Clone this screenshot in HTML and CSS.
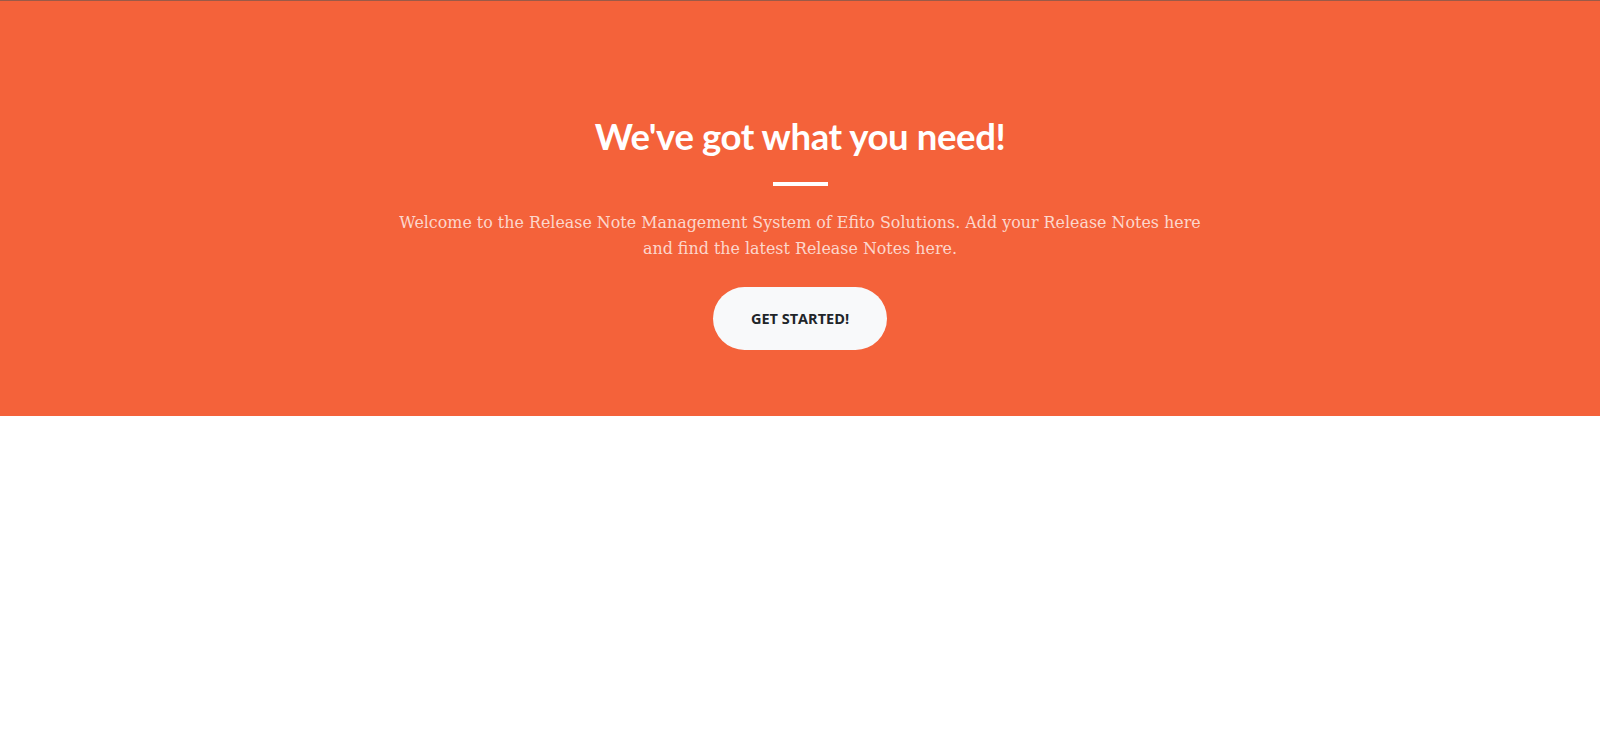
FILE: index.html
```html
<!DOCTYPE html>
<html lang="en">
<head>
<meta charset="utf-8">
<title>Release Notes</title>
<link rel="stylesheet" href="styles.css">
</head>
<body>
<section class="hero">
  <div class="hero-inner">
    <h2 class="hero-title">We've got what you need!</h2>
    <hr class="divider">
    <p class="hero-text">Welcome to the Release Note Management System of Efito Solutions. Add your Release Notes here and find the latest Release Notes here.</p>
    <a class="btn-start" href="#">Get Started!</a>
  </div>
</section>
</body>
</html>
```
FILE: styles.css
```css
html, body {
  margin: 0;
  padding: 0;
  background: #ffffff;
}
.hero {
  background: #f4623a;
  border-top: 1px solid #9a5a48;
  padding: 113px 0 66px;
  text-align: center;
}
.hero-inner {
  max-width: 820px;
  margin: 0 auto;
  display: flex;
  flex-direction: column;
  align-items: center;
}
.hero-title {
  margin: 0;
  font-family: "Lato", sans-serif;
  font-weight: 700;
  font-size: 36.5px;
  letter-spacing: -0.4px;
  line-height: 45px;
  color: #ffffff;
}
.divider {
  width: 55px;
  height: 4px;
  margin: 23px 0 24px;
  border: 0;
  background: #ffffff;
}
.hero-text {
  margin: 0 0 26px;
  font-family: "DejaVu Serif", serif;
  font-size: 15.9px;
  line-height: 25.5px;
  color: rgba(255, 255, 255, 0.75);
}
.btn-start {
  display: inline-flex;
  align-items: center;
  justify-content: center;
  height: 63px;
  padding: 0 38px;
  box-sizing: border-box;
  border-radius: 32px;
  background: #f8f9fa;
  color: #212529;
  text-decoration: none;
  text-transform: uppercase;
  font-family: "Open Sans", sans-serif;
  font-weight: 700;
  font-size: 14.5px;
}
```
